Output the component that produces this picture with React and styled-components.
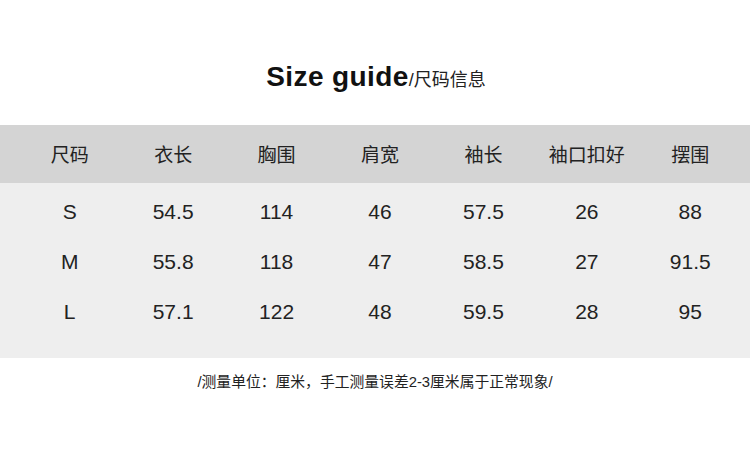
import React from "react";
import styled, { createGlobalStyle } from "styled-components";

const GlobalStyle = createGlobalStyle`
  html, body {
    margin: 0;
    padding: 0;
    background: #ffffff;
  }
  body {
    font-family: "Liberation Sans", "Noto Sans CJK SC", sans-serif;
    color: #222;
  }
`;

const Page = styled.div`
  width: 750px;
  height: 453px;
  overflow: hidden;
  background: #fff;
`;

const Heading = styled.div`
  display: flex;
  justify-content: center;
  align-items: baseline;
  padding-top: 60px;
  line-height: 34px;
  margin-bottom: 31px;
  margin-left: 2px;
`;

const TitleMain = styled.span`
  font-size: 28px;
  font-weight: 700;
  color: #111;
  letter-spacing: 0.4px;
`;

const TitleSub = styled.span`
  font-size: 18px;
  line-height: 20px;
  color: #222;
  font-family: "Liberation Sans", "Noto Sans CJK SC", sans-serif;
`;

const Table = styled.div``;

const Row = styled.div`
  display: grid;
  grid-template-columns: repeat(7, 1fr);
  padding: 0 8px 0 18px;
  height: ${(p) => p.h || 50}px;
  align-items: center;
  background: ${(p) => p.bg || "transparent"};
`;

const Cell = styled.div`
  text-align: center;
  font-size: ${(p) => (p.head ? 19 : 21)}px;
  line-height: 24px;
  font-family: ${(p) =>
    p.head
      ? `"Noto Sans CJK SC", sans-serif`
      : `"Liberation Sans", "Noto Sans CJK SC", sans-serif`};
  color: #222;
`;

const Body = styled.div`
  background: #eeeeee;
  padding: 4px 0 21px;
`;

const Note = styled.div`
  text-align: center;
  margin-top: 12px;
  font-size: 14.8px;
  color: #222;
  font-family: "Liberation Sans", "Noto Sans CJK SC", sans-serif;
`;

const headers = ["尺码", "衣长", "胸围", "肩宽", "袖长", "袖口扣好", "摆围"];
const rows = [
  ["S", "54.5", "114", "46", "57.5", "26", "88"],
  ["M", "55.8", "118", "47", "58.5", "27", "91.5"],
  ["L", "57.1", "122", "48", "59.5", "28", "95"],
];

export default function App() {
  return (
    <Page>
      <GlobalStyle />
      <Heading>
        <TitleMain>Size guide</TitleMain>
        <TitleSub>/尺码信息</TitleSub>
      </Heading>
      <Table>
        <Row bg="#d4d4d4" h={58}>
          {headers.map((h) => (
            <Cell head key={h}>{h}</Cell>
          ))}
        </Row>
        <Body>
          {rows.map((r) => (
            <Row key={r[0]}>
              {r.map((v, i) => (
                <Cell key={i}>{v}</Cell>
              ))}
            </Row>
          ))}
        </Body>
      </Table>
      <Note>/测量单位：厘米，手工测量误差2-3厘米属于正常现象/</Note>
    </Page>
  );
}
